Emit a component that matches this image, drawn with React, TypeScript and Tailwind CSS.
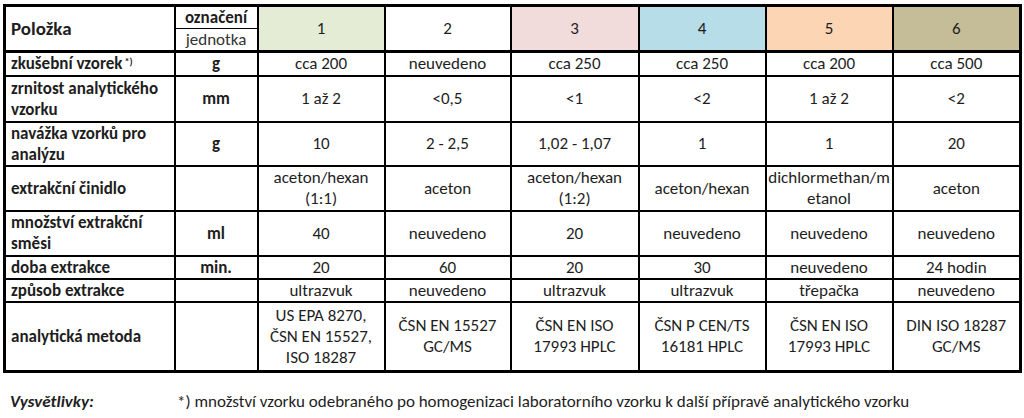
import React from "react";

const font = { fontFamily: "Carlito, Lato, 'Liberation Sans', sans-serif" };

type Row = {
  label: React.ReactNode;
  unit: string;
  vals: React.ReactNode[];
  h: string;
};

const rows: Row[] = [
  {
    label: (
      <>
        zkušební vzorek<sup className="text-[10px] relative -top-[4px] ml-[2px]">*)</sup>
      </>
    ),
    unit: "g",
    vals: ["cca 200", "neuvedeno", "cca 250", "cca 250", "cca 200", "cca 500"],
    h: "h-[24px]",
  },
  {
    label: (
      <>
        zrnitost analytického
        <br />
        vzorku
      </>
    ),
    unit: "mm",
    vals: ["1 až 2", "<0,5", "<1", "<2", "1 až 2", "<2"],
    h: "h-[46px]",
  },
  {
    label: (
      <>
        navážka vzorků pro
        <br />
        analýzu
      </>
    ),
    unit: "g",
    vals: ["10", "2 - 2,5", "1,02 - 1,07", "1", "1", "20"],
    h: "h-[44px]",
  },
  {
    label: "extrakční činidlo",
    unit: "",
    vals: [
      <>
        aceton/hexan
        <br />
        (1:1)
      </>,
      "aceton",
      <>
        aceton/hexan
        <br />
        (1:2)
      </>,
      "aceton/hexan",
      <>
        dichlormethan/m
        <br />
        etanol
      </>,
      "aceton",
    ],
    h: "h-[45px]",
  },
  {
    label: (
      <>
        množství extrakční
        <br />
        směsi
      </>
    ),
    unit: "ml",
    vals: ["40", "neuvedeno", "20", "neuvedeno", "neuvedeno", "neuvedeno"],
    h: "h-[45px]",
  },
  {
    label: "doba extrakce",
    unit: "min.",
    vals: ["20", "60", "20", "30", "neuvedeno", "24 hodin"],
    h: "h-[22px]",
  },
  {
    label: "způsob extrakce",
    unit: "",
    vals: ["ultrazvuk", "neuvedeno", "ultrazvuk", "ultrazvuk", "třepačka", "neuvedeno"],
    h: "h-[20px]",
  },
  {
    label: "analytická metoda",
    unit: "",
    vals: [
      <>
        US EPA 8270,
        <br />
        ČSN EN 15527,
        <br />
        ISO 18287
      </>,
      <>
        ČSN EN 15527
        <br />
        GC/MS
      </>,
      <>
        ČSN EN ISO
        <br />
        17993 HPLC
      </>,
      <>
        ČSN P CEN/TS
        <br />
        16181 HPLC
      </>,
      <>
        ČSN EN ISO
        <br />
        17993 HPLC
      </>,
      <>
        DIN ISO 18287
        <br />
        GC/MS
      </>,
    ],
    h: "h-[70px]",
  },
];

const headBg = [
  "bg-[#e4ecd6]",
  "bg-white",
  "bg-[#f2dcdb]",
  "bg-[#b7dde8]",
  "bg-[#fcd5b4]",
  "bg-[#c4bd97]",
];

export default function App() {
  return (
    <div className="w-[1024px] h-[418px] bg-white text-[#1e1e1e] overflow-hidden" style={font}>
      <div className="pt-[4px] pl-[3px]">
        <table className="table-fixed border-collapse w-[1018px] border-[3px] border-black text-[17px] leading-[21px]">
          <colgroup>
            <col className="w-[170px]" />
            <col className="w-[83px]" />
            <col className="w-[127px]" />
            <col className="w-[126px]" />
            <col className="w-[128px]" />
            <col className="w-[127px]" />
            <col className="w-[127px]" />
            <col className="w-[128px]" />
          </colgroup>
          <tbody>
            <tr className="h-[23px]">
              <td
                rowSpan={2}
                className="border-[2px] border-black border-b-[3px] pl-[5px] text-left align-middle font-bold text-[19px]"
              >
                Položka
              </td>
              <td className="border-x-[2px] border-t-[2px] border-b border-black text-center font-bold leading-[20px] p-0">
                označení
              </td>
              {[1, 2, 3, 4, 5, 6].map((n, i) => (
                <td
                  key={n}
                  rowSpan={2}
                  className={`border-[2px] border-black border-b-[3px] text-center align-middle ${headBg[i]}`}
                >
                  {n}
                </td>
              ))}
            </tr>
            <tr className="h-[23px]">
              <td className="border-x-[2px] border-b-[3px] border-black text-center leading-[20px] p-0 text-[#333]">
                jednotka
              </td>
            </tr>
            {rows.map((r, ri) => (
              <tr key={ri} className={r.h}>
                <td className="border-[2px] border-black pl-[5px] pr-0 py-0 text-left align-middle font-bold whitespace-nowrap">
                  {r.label}
                </td>
                <td className="border-[2px] border-black p-0 text-center align-middle font-bold">
                  {r.unit}
                </td>
                {r.vals.map((v, vi) => (
                  <td
                    key={vi}
                    className="border-[2px] border-black p-0 text-center align-middle whitespace-nowrap"
                  >
                    {v}
                  </td>
                ))}
              </tr>
            ))}
          </tbody>
        </table>
      </div>
      <div className="flex items-center mt-[19px] text-[17px] leading-[20px]">
        <div className="w-[177px] pl-[10px] font-bold italic">Vysvětlivky:</div>
        <div>*) množství vzorku odebraného po homogenizaci laboratorního vzorku k další přípravě analytického vzorku</div>
      </div>
    </div>
  );
}
